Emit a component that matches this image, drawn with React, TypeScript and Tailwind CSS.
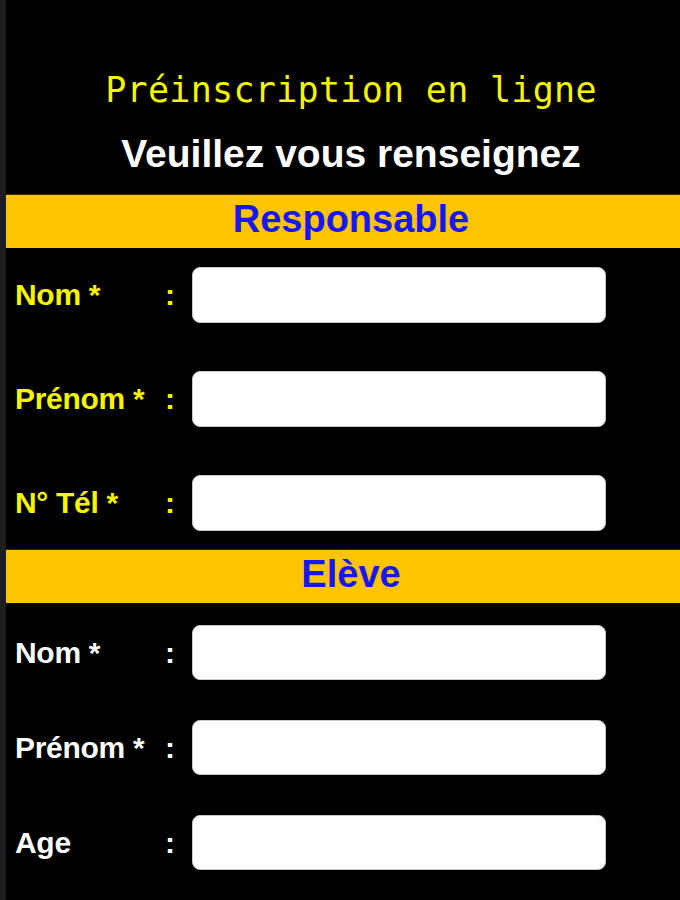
const sans = "font-['Liberation_Sans',Arial,sans-serif]";

type Row = { label: string };

function Field({ label, tone, rowH }: { label: string; tone: "yellow" | "white"; rowH: string }) {
  const color = tone === "yellow" ? "text-[#f5f500]" : "text-white";
  return (
    <div className={`flex items-center ${rowH}`}>
      <label className={`${sans} w-[153px] shrink-0 font-bold text-[30px] leading-none tracking-[-0.3px] ${color}`}>{label}</label>
      <span className={`${sans} w-[24px] shrink-0 -ml-[3px] font-bold text-[30px] leading-none ${color}`}>:</span>
      <input
        type="text"
        className={`ml-[3px] w-[414px] h-full rounded-[8px] bg-white border border-[#c8c8c8] outline-none px-3 text-black ${sans} text-[20px]`}
      />
    </div>
  );
}

function SectionBar({ title }: { title: string }) {
  return (
    <div className="h-[54px] bg-[#fdc500] border-t border-[#3a2e00] flex items-center justify-center pl-4 pb-[6px]">
      <h2 className={`${sans} text-[38px] leading-none font-bold text-[#1717f2]`}>{title}</h2>
    </div>
  );
}

const responsable: Row[] = [{ label: "Nom *" }, { label: "Prénom *" }, { label: "N° Tél *" }];
const eleve: Row[] = [{ label: "Nom *" }, { label: "Prénom *" }, { label: "Age" }];

export default function App() {
  return (
    <div className="w-[680px] h-[900px] overflow-hidden bg-black border-l-[6px] border-[#1e1e1e]">
      <div className="pt-[66px] pl-4 flex flex-col items-center">
        <h1 className="font-['DejaVu_Sans_Mono',monospace] text-[35px] leading-[48px] text-[#f5f500] tracking-[0.3px]">
          Préinscription en ligne
        </h1>
        <p className={`${sans} mt-[16px] text-[39px] leading-[48px] font-bold text-white`}>Veuillez vous renseignez</p>
      </div>

      <div className="mt-[16px]">
        <SectionBar title="Responsable" />
        <div className="pl-[9px] pt-[19px] flex flex-col gap-[48px]">
          {responsable.map((r) => (
            <Field key={r.label} label={r.label} tone="yellow" rowH="h-[56px]" />
          ))}
        </div>
      </div>

      <div className="mt-[18px]">
        <SectionBar title="Elève" />
        <div className="pl-[9px] pt-[22px] flex flex-col gap-[40px]">
          {eleve.map((r) => (
            <Field key={r.label} label={r.label} tone="white" rowH="h-[55px]" />
          ))}
        </div>
      </div>
    </div>
  );
}
